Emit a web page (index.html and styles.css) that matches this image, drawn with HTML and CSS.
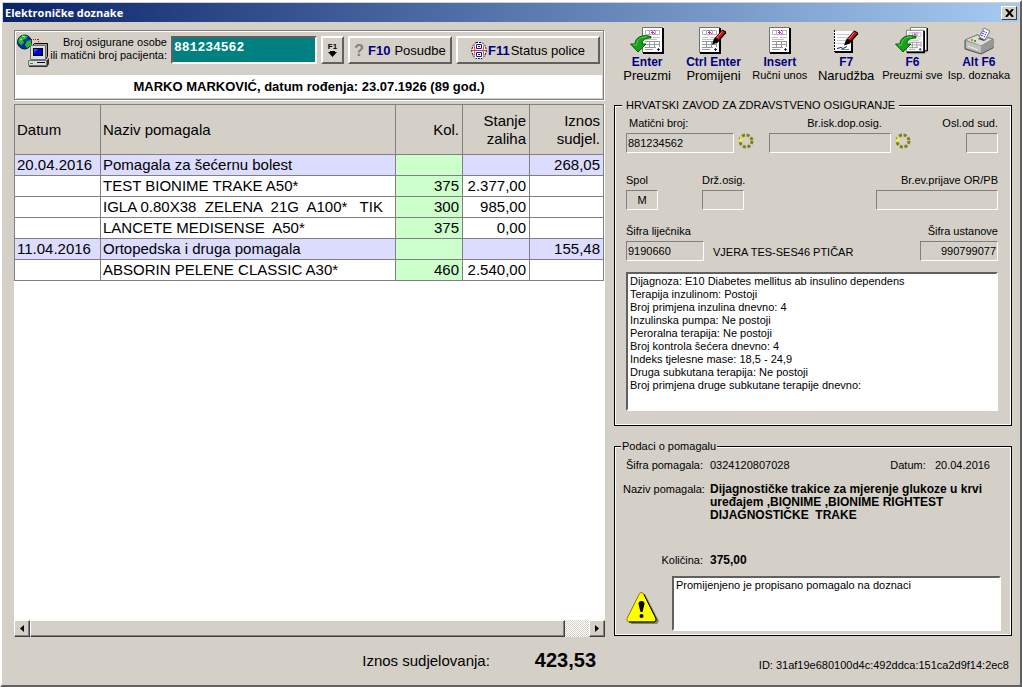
FILE: index.html
```html
<!DOCTYPE html>
<html lang="hr">
<head>
    <meta charset="UTF-8">
    <meta name="viewport" content="width=device-width, initial-scale=1.0">
    <title>Elektroničke doznake</title>
    <link rel="stylesheet" href="styles.css">
</head>
<body>
    <!-- Shared icon shapes -->
    <svg class="icon-defs" width="0" height="0" aria-hidden="true">
        <symbol id="page" viewBox="0 0 22 27">
            <path d="M.5 .5h20v25H.5z" fill="#fff" stroke="#707070"/>
            <path d="M21 1v25H1" fill="none" stroke="#000" stroke-width="2"/>
            <path d="M3.500 3.500h14v4h-14zM7.500 3v4M13.500 3v4" fill="none" stroke="#b4b4b4"/>
            <path d="M9 5.500h3M10 4.500h1M10 6.500h1M9 3.500h1M12 6.500h1M12 3.500h1" stroke="#d020d0"/>
            <path d="M3 10.500h6M11 10.500h7M3 12.500h12" fill="none" stroke="#c4c4c4"/>
            <path d="M3 14.500h15M3 17.500h15M3 20.500h11M7.500 14v6M12.500 14v6M17.500 14v6M3 22.500h8" fill="none" stroke="#989898"/>
            <path d="M15 22.500h3M16.500 21v3" stroke="#2020c0"/>
        </symbol>
        <symbol id="arrow" viewBox="0 0 22 18">
            <path d="M21 1.500C13-1 5 2 5 9H.5L8 17l8-8h-4c0-4 3-6 9-6z" fill="#18a018" stroke="#056005"/>
            <path d="M17 2C11 1.500 7 4 6.500 10H3" fill="none" stroke="#55d455"/>
        </symbol>
        <symbol id="pencil" viewBox="0 0 16 16">
            <path d="M0 16l2-6L11 0l4 2v2L6 14z" fill="#000"/>
            <path d="M4 9l7-8 3 2-7 8z" fill="#d01414"/>
            <path d="M5 9l6-7" stroke="#ff7070"/>
        </symbol>
        <symbol id="refresh" viewBox="0 0 16 16">
            <circle cx="8" cy="8" r="6" fill="none" stroke="#808018" stroke-width="3" stroke-dasharray="3 1.700"/>
            <path d="M0 8l3-4 2 3-1 1z" fill="#f4f428"/>
        </symbol>
    </svg>

    <div class="window">
        <header class="title-bar">
            <h1>Elektroničke doznake</h1>
            <button type="button" class="close-btn" aria-label="Zatvori">
                <svg width="9" height="8" viewBox="0 0 9 8"><path d="M1 0l7 8M8 0L1 8" stroke="#000" stroke-width="2"/></svg>
            </button>
        </header>

        <main class="content">
            <section class="left">
                <div class="patient-panel">
                    <div class="search-row">
                        <svg class="net-icon" width="34" height="34" viewBox="0 0 34 34">
                            <path d="M14 5.500h8M21.500 5v5" fill="none" stroke="#e00000" stroke-dasharray="1 1"/>
                            <circle cx="7.500" cy="8" r="7" fill="#0030a8" stroke="#001840"/>
                            <path d="M2 4l4-3 5 1-2 3-3 1 1 3-3 2-3-3zM10 7l4-1v5l-4 3-2-3z" fill="#28b828"/>
                            <path d="M5 2l3 1M3 6l2-1" stroke="#b8f0e0"/>
                            <path d="M15.500 11.500l2-2h13v13l-2 3" fill="#a0a0a0" stroke="#000"/>
                            <path d="M13.500 11.500h15v14h-15z" fill="#dcdcdc" stroke="#707070"/>
                            <path d="M16 14h10v8H16z" fill="#000"/>
                            <path d="M17 15h8v6h-8z" fill="#0000d8"/>
                            <path d="M17 19l4-4h-4z" fill="#3850ff"/>
                            <path d="M12 26h18l2-2v6l-2 3H12z" fill="#303030"/>
                            <path d="M11.500 26.500h18v5h-18z" fill="#dcdcdc" stroke="#707070"/>
                            <path d="M13 29.500h3" stroke="#00b000"/><path d="M20 28.500h8" stroke="#000"/>
                        </svg>
                        <label for="patientId">Broj osigurane osobe<br>ili matični broj pacijenta:</label>
                        <input type="text" id="patientId" class="patient-id" value="881234562">
                        <button type="button" class="btn lookup-btn" title="Traži">
                            <span>F1</span>
                            <svg width="9" height="6" viewBox="0 0 9 6"><path d="M2 0h5v1h2L4.500 6 0 1h2z"/></svg>
                        </button>
                        <button type="button" class="btn loan-btn"><span class="help">?</span> <b>F10</b> Posudbe</button>
                        <button type="button" class="btn status-btn">
                            <svg width="16" height="17" viewBox="0 0 16 17">
                                <path d="M5 .5h6l3 3 1.500 5-1.500 5-3 3H5l-3-3-1.500-5 1.500-5z" fill="#fff" stroke="#111" stroke-dasharray="2 1"/>
                                <path d="M3 3l1 5.500L3 14M13 3l-1 5.500 1 5.500M1 8.500h14" fill="none" stroke="#d04040"/>
                                <path d="M5.500 2.500h5v4h-5zM5.500 10.500h5v4h-5z" fill="#fff" stroke="#1818a8"/>
                                <path d="M7 4.500h2M7 12.500h2" stroke="#1818a8"/>
                            </svg>
                            <b>F11</b>Status police
                        </button>
                    </div>
                    <p class="patient-name">MARKO MARKOVIĆ, datum rođenja: 23.07.1926 (89 god.)</p>
                </div>

                <div class="grid-box">
                    <table>
                        <colgroup>
                            <col class="col-date">
                            <col>
                            <col class="col-num">
                            <col class="col-num">
                            <col class="col-sum">
                        </colgroup>
                        <thead>
                            <tr>
                                <th>Datum</th>
                                <th>Naziv pomagala</th>
                                <th class="num">Kol.</th>
                                <th class="num">Stanje zaliha</th>
                                <th class="num">Iznos sudjel.</th>
                            </tr>
                        </thead>
                        <tbody>
                            <tr class="group"><td>20.04.2016</td><td>Pomagala za šećernu bolest</td><td class="num qty"></td><td class="num"></td><td class="num">268,05</td></tr>
                            <tr><td></td><td>TEST BIONIME TRAKE A50*</td><td class="num qty">375</td><td class="num">2.377,00</td><td class="num"></td></tr>
                            <tr><td></td><td>IGLA 0.80X38  ZELENA  21G  A100*   TIK</td><td class="num qty">300</td><td class="num">985,00</td><td class="num"></td></tr>
                            <tr><td></td><td>LANCETE MEDISENSE  A50*</td><td class="num qty">375</td><td class="num">0,00</td><td class="num"></td></tr>
                            <tr class="group"><td>11.04.2016</td><td>Ortopedska i druga pomagala</td><td class="num qty"></td><td class="num"></td><td class="num">155,48</td></tr>
                            <tr><td></td><td>ABSORIN PELENE CLASSIC A30*</td><td class="num qty">460</td><td class="num">2.540,00</td><td class="num"></td></tr>
                        </tbody>
                    </table>
                </div>
                <div class="scrollbar">
                    <button type="button" class="scroll-btn" aria-label="Lijevo"><svg width="4" height="7" viewBox="0 0 4 7"><path d="M4 0v7L0 3.500z"/></svg></button>
                    <div class="scroll-thumb"></div>
                    <div class="scroll-track"></div>
                    <button type="button" class="scroll-btn" aria-label="Desno"><svg width="4" height="7" viewBox="0 0 4 7"><path d="M0 0v7l4-3.500z"/></svg></button>
                </div>

                <div class="total">
                    <span>Iznos sudjelovanja:</span>
                    <strong>423,53</strong>
                </div>
            </section>

            <section class="right">
                <nav class="toolbar">
                    <button type="button" class="tool">
                        <svg width="34" height="28" viewBox="0 0 34 28"><use href="#page" x="12" width="22" height="27"/><use href="#arrow" x="0" y="8" width="22" height="18"/></svg>
                        <b>Enter</b><span>Preuzmi</span>
                    </button>
                    <button type="button" class="tool">
                        <svg width="28" height="28" viewBox="0 0 28 28"><use href="#page" width="22" height="27"/><use href="#pencil" x="13" y="2" width="15" height="16"/></svg>
                        <b>Ctrl Enter</b><span>Promijeni</span>
                    </button>
                    <button type="button" class="tool">
                        <svg width="22" height="28" viewBox="0 0 22 28"><use href="#page" width="22" height="27"/></svg>
                        <b>Insert</b><span class="small">Ručni unos</span>
                    </button>
                    <button type="button" class="tool">
                        <svg width="26" height="28" viewBox="0 0 26 28">
                            <path d="M1 4h18v21H1z" fill="#fff"/>
                            <path d="M1.500 3v22" stroke="#000" stroke-dasharray="2 1"/>
                            <path d="M2 25h17V13" fill="none" stroke="#000" stroke-width="2"/>
                            <path d="M4 7.500h12M4 10.500h10M4 13.500h8M4 16.500h8" stroke="#c8c8c8"/>
                            <path d="M4 21.500l4-1 2 1 4-2" fill="none" stroke="#101090"/>
                            <path d="M8 22.500h8" stroke="#30a070"/>
                            <use href="#pencil" x="11" y="3" width="15" height="16"/>
                        </svg>
                        <b>F7</b><span>Narudžba</span>
                    </button>
                    <button type="button" class="tool">
                        <svg width="34" height="28" viewBox="0 0 34 28"><path d="M15.500 .5h16v23h-16z" fill="#fff" stroke="#808080"/><path d="M32.500 1v23H18" fill="none" stroke="#000"/><use href="#page" x="11" y="2" width="19" height="25" preserveAspectRatio="none"/><use href="#arrow" x="0" y="8" width="22" height="18"/></svg>
                        <b>F6</b><span class="small">Preuzmi sve</span>
                    </button>
                    <button type="button" class="tool">
                        <svg width="30" height="28" viewBox="0 0 30 28">
                            <path d="M1 13l12-5 16 4v9l-12 6L1 22z" fill="#909090" stroke="#555"/>
                            <path d="M1 13l12-5 16 4-12 7z" fill="#dcdcd8" stroke="#888"/>
                            <path d="M2 14l15 5v7L2 21z" fill="#c0c0bc"/>
                            <path d="M17 19l12-7v8l-12 6z" fill="#989894"/>
                            <path d="M14 12l6 2 3-2-6-2z" fill="#484848"/>
                            <path d="M15 10l5-9 6 3-5 9z" fill="#fff" stroke="#777"/>
                            <path d="M19 4l4 2M18 6l4 2M17 8l4 2" stroke="#2020c8" stroke-dasharray="2 1"/>
                            <path d="M7 13h2" stroke="#e08020" stroke-width="2"/><path d="M10 14h2" stroke="#20b020" stroke-width="2"/>
                            <path d="M4 19l10 4" stroke="#eee"/>
                        </svg>
                        <b>Alt F6</b><span class="small">Isp. doznaka</span>
                    </button>
                </nav>

                <fieldset class="insurance">
                    <legend>HRVATSKI ZAVOD ZA ZDRAVSTVENO OSIGURANJE</legend>
                    <div class="row">
                        <div class="field">
                            <label for="insNo">&nbsp;Matični broj:</label>
                            <input type="text" id="insNo" class="w-md" value="881234562" readonly>
                        </div>
                        <svg class="refresh" width="16" height="16"><use href="#refresh"/></svg>
                        <div class="field right-label push">
                            <label for="extraNo">Br.isk.dop.osig.&nbsp;&nbsp;&nbsp;</label>
                            <input type="text" id="extraNo" class="w-lg" readonly>
                        </div>
                        <svg class="refresh" width="16" height="16"><use href="#refresh"/></svg>
                        <div class="field right-label end">
                            <label for="exempt">Osl.od sud.</label>
                            <input type="text" id="exempt" class="w-xs" readonly>
                        </div>
                    </div>
                    <div class="row personal">
                        <div class="field sex">
                            <label for="sex">Spol</label>
                            <input type="text" id="sex" class="w-xs center" value="M" readonly>
                        </div>
                        <div class="field">
                            <label for="country">Drž.osig.</label>
                            <input type="text" id="country" class="w-sm" readonly>
                        </div>
                        <div class="field right-label end">
                            <label for="orpb">Br.ev.prijave OR/PB</label>
                            <input type="text" id="orpb" class="w-lg" readonly>
                        </div>
                    </div>
                    <div class="row doctor">
                        <div class="field">
                            <label for="doctor">Šifra liječnika</label>
                            <input type="text" id="doctor" class="w-code" value="9190660" readonly>
                        </div>
                        <span class="doctor-name">VJERA TES-SES46 PTIČAR</span>
                        <div class="field right-label end">
                            <label for="institution">Šifra ustanove</label>
                            <input type="text" id="institution" class="w-code text-right" value="990799077" readonly>
                        </div>
                    </div>
                    <textarea class="memo" aria-label="Dijagnoza" readonly>Dijagnoza: E10 Diabetes mellitus ab insulino dependens
Terapija inzulinom: Postoji
Broj primjena inzulina dnevno: 4
Inzulinska pumpa: Ne postoji
Peroralna terapija: Ne postoji
Broj kontrola šećera dnevno: 4
Indeks tjelesne mase: 18,5 - 24,9
Druga subkutana terapija: Ne postoji
Broj primjena druge subkutane terapije dnevno:</textarea>
                </fieldset>

                <fieldset class="device">
                    <legend>Podaci o pomagalu</legend>
                    <div class="device-info">
                        <span class="name">Šifra pomagala:</span>
                        <div class="code-line"><span>0324120807028</span><span class="date">Datum:&nbsp;&nbsp; 20.04.2016</span></div>
                        <span class="name">Naziv pomagala:</span>
                        <strong>Dijagnostičke trakice za mjerenje glukoze u krvi<br>uređajem ,BIONIME ,BIONIME RIGHTEST<br>DIJAGNOSTIČKE&nbsp; TRAKE</strong>
                        <span class="name">Količina:</span>
                        <strong>375,00</strong>
                    </div>
                    <div class="note-row">
                        <svg width="34" height="34" viewBox="0 0 34 34">
                            <path d="M17 3h2l14 27-2 3H5z" fill="#808080"/>
                            <path d="M15 1.500q2 0 3 2l12 24q1 3-2 3.500H3q-3-1-2-3.500l12-24q1-2 2-2z" fill="#ff0" stroke="#808000"/>
                            <path d="M18 3.500l12 24q1 3-2 3.500H3" fill="none" stroke="#000"/>
                            <path d="M15.500 10q3 0 3 3l-2 8h-2l-2-8q0-3 3-3z"/>
                            <circle cx="15.500" cy="25" r="2"/>
                        </svg>
                        <textarea class="note" aria-label="Napomena" readonly>Promijenjeno je propisano pomagalo na doznaci</textarea>
                    </div>
                </fieldset>

                <p class="record-id">ID: 31af19e680100d4c:492ddca:151ca2d9f14:2ec8</p>
            </section>
        </main>
    </div>
</body>
</html>
```

FILE: styles.css
```css
* {
    margin: 0;
    padding: 0;
    box-sizing: border-box;
}

body {
    background: #d4d0c8;
    color: #000;
    font-family: "Liberation Sans", Arial, sans-serif;
    font-size: 11px;
    line-height: 13px;
}

button,
input,
textarea {
    font: inherit;
    color: inherit;
    border-radius: 0;
    outline: none;
}

svg {
    flex: none;
}

.icon-defs {
    position: absolute;
}

.window {
    min-height: 100vh;
    display: flex;
    flex-direction: column;
    padding: 1px;
    border: 2px solid;
    border-color: #fff #606060 #606060 #fff;
}

/* Title bar */
.title-bar {
    display: flex;
    align-items: center;
    justify-content: space-between;
    height: 19px;
    padding: 0 2px;
    background: linear-gradient(to right, #0a246a, #a6caf0);
    color: #fff;
}

.title-bar h1 {
    font-family: "Open Sans", sans-serif;
    font-size: 11px;
    line-height: 19px;
    font-weight: bold;
}

.close-btn {
    display: flex;
    align-items: center;
    justify-content: center;
    width: 16px;
    height: 14px;
    background: #d4d0c8;
    border: 1px solid;
    border-color: #fff #404040 #404040 #fff;
}

.content {
    flex: 1;
    display: grid;
    grid-template-columns: 591fr 398fr;
    gap: 9px;
    padding: 5px 7px 0 11px;
}

.left,
.right {
    display: flex;
    flex-direction: column;
    min-width: 0;
}

/* Patient search */
.left {
    padding-top: 3px;
}

.patient-panel {
    margin-right: 1px;
    padding: 5px 1px 1px;
    border: 1px solid #808080;
    box-shadow: inset 1px 1px #fff, 1px 1px #fff;
}

.search-row {
    display: flex;
    align-items: stretch;
    gap: 4px;
    height: 39px;
    padding: 0 2px 11px 1px;
}

.search-row label {
    flex: 1;
    text-align: right;
    white-space: nowrap;
}

.net-icon {
    margin: -2px -8px 0 0;
}

.patient-id {
    flex: none;
    width: 146px;
    padding: 0 1px 5px;
    background: #008080;
    color: #fff;
    border: 2px solid;
    border-color: #606060 #fff #fff #606060;
    font-family: "Liberation Mono", monospace;
    font-size: 13px;
    font-weight: bold;
}

.btn {
    flex: none;
    display: flex;
    align-items: center;
    justify-content: center;
    gap: 4px;
    background: #d4d0c8;
    border: 2px solid;
    border-color: #fff #606060 #606060 #fff;
    font-size: 13px;
    white-space: nowrap;
}

.btn b,
.tool b {
    color: #000080;
}

.lookup-btn {
    flex-direction: column;
    gap: 0;
    width: 23px;
    font-size: 8px;
    line-height: 8px;
    font-weight: bold;
}

.loan-btn {
    width: 104px;
}

.status-btn {
    width: 144px;
    gap: 1px;
}

.help {
    color: #808080;
    font-size: 16px;
    font-weight: bold;
}

.patient-name {
    background: #fff;
    font-size: 13px;
    line-height: 23px;
    font-weight: bold;
    text-align: center;
}

/* Items table */
.grid-box {
    flex: 1;
    margin-top: 4px;
    background: #fff;
}

table {
    width: calc(100% - 1px);
    table-layout: fixed;
    border-collapse: collapse;
    font-size: 15px;
    line-height: 18px;
}

.col-date {
    width: 86px;
}

.col-num {
    width: 67px;
}

.col-sum {
    width: 74px;
}

th,
td {
    height: 21px;
    padding: 0 3px 0 2px;
    border: 1px solid #808080;
    text-align: left;
    white-space: pre;
}

th {
    height: 50px;
    background: #d4d0c8;
    font-weight: normal;
    white-space: normal;
}

.num {
    text-align: right;
}

.group td {
    background: #dcdcff;
}

td.qty,
.group td.qty {
    background: #ccffcc;
}

.scrollbar {
    display: flex;
    height: 17px;
    background: repeating-conic-gradient(#fff 0 25%, #d4d0c8 0 50%) 0 0 / 2px 2px;
}

.scroll-btn,
.scroll-thumb {
    background: #d4d0c8;
    border: 1px solid;
    border-color: #fff #404040 #404040 #fff;
    box-shadow: inset -1px -1px #808080;
}

.scroll-btn {
    display: flex;
    align-items: center;
    justify-content: center;
    width: 16px;
}

.scroll-thumb {
    flex: 535;
}

.scroll-track {
    flex: 24;
}

.total {
    display: flex;
    align-items: center;
    justify-content: flex-end;
    gap: 45px;
    height: 47px;
    padding-right: 9px;
    font-size: 15px;
}

.total strong {
    font-size: 20px;
}

/* Toolbar */
.toolbar {
    display: grid;
    grid-template-columns: repeat(6, 1fr);
    height: 72px;
}

.tool {
    display: flex;
    flex-direction: column;
    align-items: center;
    background: none;
    border: none;
    font-size: 13px;
    white-space: nowrap;
}

.tool b {
    font-size: 12px;
    line-height: 14px;
}

.small {
    font-size: 11px;
}

/* Group boxes */
fieldset {
    display: flex;
    flex-direction: column;
    min-width: 0;
    border: 1px solid #000;
    box-shadow: inset 1px 1px #fff, inset -1px -1px #fff;
}

legend {
    margin-left: -4px;
    padding: 0 4px;
    background: #d4d0c8;
}

.insurance {
    flex: 1;
    padding: 5px 13px 14px 11px;
}

.row {
    display: flex;
    align-items: flex-end;
}

.personal {
    margin-top: 21px;
}

.doctor {
    margin: 15px 0 11px;
}

.field {
    display: flex;
    flex-direction: column;
    gap: 3px;
    white-space: nowrap;
}

.right-label {
    align-items: flex-end;
}

.end {
    margin-left: auto;
}

.push {
    margin-left: 15px;
}

.field input {
    height: 20px;
    padding: 0 1px;
    background: transparent;
    border: 1px solid;
    border-color: #808080 #fff #fff #808080;
}

.w-xs { width: 32px; }
.w-sm { width: 42px; }
.w-code { width: 78px; }
.w-md { width: 108px; }
.w-lg { width: 122px; }

.field input.center {
    text-align: center;
}

.field input.text-right {
    text-align: right;
}

.sex {
    width: 76px;
}

.refresh {
    margin: 0 0 4px 4px;
}

.doctor-name {
    margin: 0 0 2px 9px;
}

.memo,
.note {
    display: block;
    width: 100%;
    padding: 1px 2px;
    background: #fff;
    border: 2px solid;
    border-color: #606060 #fff #fff #606060;
    resize: none;
    overflow: hidden;
}

.memo {
    flex: 1;
}

.device {
    margin-top: 14px;
    padding: 6px 10px 4px 8px;
}

.device legend {
    margin-left: -2px;
    padding: 0 1px;
}

.device-info {
    display: grid;
    grid-template-columns: 80px 1fr;
    grid-template-rows: 24px 71px 22px;
    column-gap: 7px;
}

.device-info strong {
    font-size: 12px;
}

.name {
    text-align: right;
    white-space: nowrap;
}

.code-line {
    display: flex;
    justify-content: space-between;
    padding-right: 11px;
}

.note-row {
    display: flex;
    align-items: flex-end;
    gap: 12px;
}

.note-row svg {
    margin: 0 0 6px 3px;
}

.note {
    height: 55px;
}

.record-id {
    height: 48px;
    padding: 23px 3px 0 0;
    text-align: right;
}
```
